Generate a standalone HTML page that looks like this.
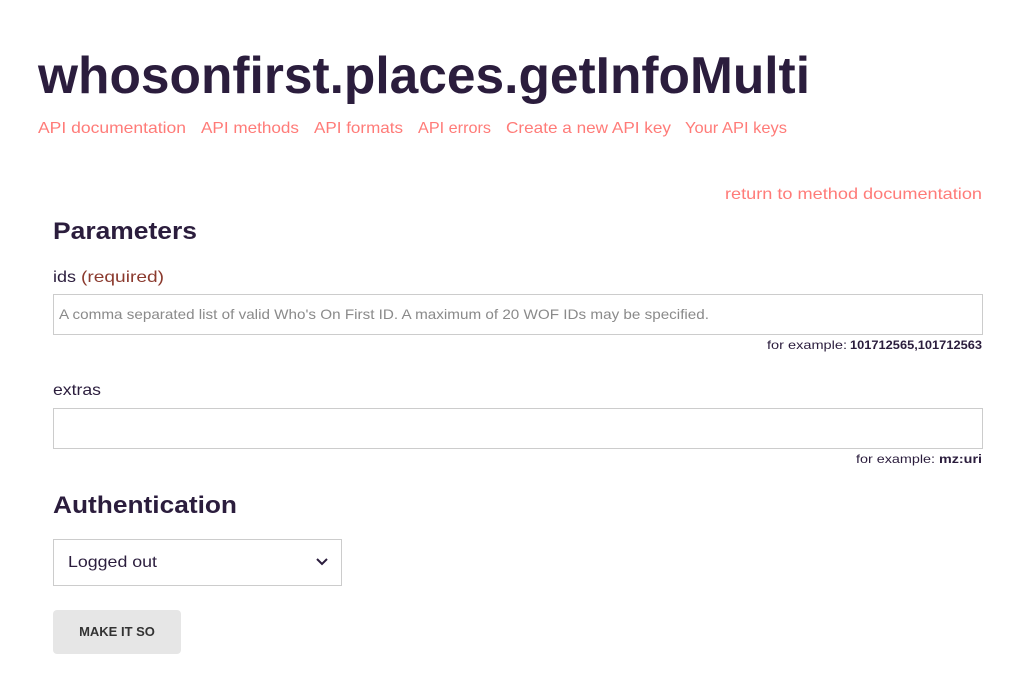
<!DOCTYPE html>
<html><head><meta charset="utf-8"><style>
body{margin:0;background:#fff;font-family:"Liberation Sans",sans-serif;color:#2b1d3d;}
svg{position:absolute;overflow:visible}
.inp{position:absolute;left:53px;width:930px;height:41px;border:1px solid #ccc;box-sizing:border-box;}
</style></head><body>
<svg style="left:0;top:0" width="1016" height="680">
<text x="38" y="93" font-family="Liberation Sans" font-weight="bold" font-size="52" fill="#2b1d3d" textLength="772" lengthAdjust="spacingAndGlyphs">whosonfirst.places.getInfoMulti</text>
<g font-family="Liberation Sans" font-size="16" fill="#ff7b78">
<text x="38" y="133" textLength="148" lengthAdjust="spacingAndGlyphs">API documentation</text>
<text x="201" y="133" textLength="98" lengthAdjust="spacingAndGlyphs">API methods</text>
<text x="314" y="133" textLength="89" lengthAdjust="spacingAndGlyphs">API formats</text>
<text x="418" y="133" textLength="73" lengthAdjust="spacingAndGlyphs">API errors</text>
<text x="506" y="133" textLength="165" lengthAdjust="spacingAndGlyphs">Create a new API key</text>
<text x="685" y="133" textLength="102" lengthAdjust="spacingAndGlyphs">Your API keys</text>
<text x="725" y="199" textLength="257" lengthAdjust="spacingAndGlyphs">return to method documentation</text>
</g>
<text x="53" y="239" font-family="Liberation Sans" font-weight="bold" font-size="24" fill="#2b1d3d" textLength="144" lengthAdjust="spacingAndGlyphs">Parameters</text>
<text x="53" y="282" font-family="Liberation Sans" font-size="16" fill="#2b1d3d" textLength="23" lengthAdjust="spacingAndGlyphs">ids</text>
<text x="81" y="282" font-family="Liberation Sans" font-size="16" fill="#8b3a2e" textLength="83" lengthAdjust="spacingAndGlyphs">(required)</text>
<text x="59" y="319" font-family="Liberation Sans" font-size="14" fill="#8a8a8a" textLength="650" lengthAdjust="spacingAndGlyphs">A comma separated list of valid Who's On First ID. A maximum of 20 WOF IDs may be specified.</text>
<text x="767" y="349" font-family="Liberation Sans" font-size="12" fill="#2b1d3d" textLength="80" lengthAdjust="spacingAndGlyphs">for example:</text>
<text x="850" y="349" font-family="Liberation Sans" font-size="12" font-weight="bold" fill="#2b1d3d" textLength="132" lengthAdjust="spacingAndGlyphs">101712565,101712563</text>
<text x="53" y="395" font-family="Liberation Sans" font-size="16" fill="#2b1d3d" textLength="48" lengthAdjust="spacingAndGlyphs">extras</text>
<text x="856" y="463" font-family="Liberation Sans" font-size="12" fill="#2b1d3d" textLength="79" lengthAdjust="spacingAndGlyphs">for example:</text>
<text x="939" y="463" font-family="Liberation Sans" font-size="12" font-weight="bold" fill="#2b1d3d" textLength="43" lengthAdjust="spacingAndGlyphs">mz:uri</text>
<text x="53" y="513" font-family="Liberation Sans" font-weight="bold" font-size="24" fill="#2b1d3d" textLength="184" lengthAdjust="spacingAndGlyphs">Authentication</text>
<text x="68" y="567" font-family="Liberation Sans" font-size="16" fill="#2b1d3d" textLength="89" lengthAdjust="spacingAndGlyphs">Logged out</text>
<path d="M317 559 L322 564 L327 559" stroke="#2b1d3d" stroke-width="2" fill="none"/>
</svg>
<div class="inp" style="top:294px"></div>
<div class="inp" style="top:408px"></div>
<div style="position:absolute;left:53px;top:539px;width:289px;height:47px;border:1px solid #ccc;box-sizing:border-box"></div>
<div style="position:absolute;left:53px;top:610px;width:128px;height:44px;background:#e6e6e6;border-radius:4px;font-weight:bold;font-size:13px;line-height:44px;text-align:center;color:#333">MAKE IT SO</div>
</body></html>
